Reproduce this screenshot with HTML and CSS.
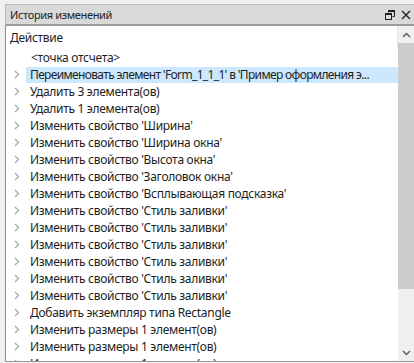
FILE: index.html
```html
<!DOCTYPE html>
<html lang="ru">
<head>
<meta charset="utf-8">
<title>История изменений</title>
<link rel="stylesheet" href="styles.css">
</head>
<body>
<div class="panel">
  <div class="titlebar">
    <span class="title">История изменений</span>
    <span class="tools">
      <svg class="ico" width="10" height="10" viewBox="0 0 10 10"><path d="M3.5 0.5h6v6h-2M3.5 0.5v2" fill="none" stroke="#1e1e1e" stroke-width="1"/><path d="M3.5 1h6" stroke="#1e1e1e" stroke-width="2"/><rect x="0.5" y="3.5" width="6" height="6" fill="none" stroke="#1e1e1e"/><path d="M0.5 4h6" stroke="#1e1e1e" stroke-width="2"/></svg>
      <svg class="ico" width="10" height="10" viewBox="0 0 10 10"><path d="M1 1L9 9M9 1L1 9" stroke="#1e1e1e" stroke-width="1.3"/></svg>
    </span>
  </div>
  <div class="content">
    <div class="list">
      <div class="header">Действие</div>
      <div class="row root"><span class="txt">&lt;точка отсчета&gt;</span></div>
      <div class="row sel"><svg class="chev" width="6" height="9" viewBox="0 0 6 9"><path d="M1 1l3.5 3.5L1 8" fill="none" stroke="#a8a8a8" stroke-width="1.3"/></svg><span class="txt">Переименовать элемент 'Form_1_1_1' в 'Пример оформления э...</span></div>
      <div class="row"><svg class="chev" width="6" height="9" viewBox="0 0 6 9"><path d="M1 1l3.5 3.5L1 8" fill="none" stroke="#a8a8a8" stroke-width="1.3"/></svg><span class="txt">Удалить 3 элемента(ов)</span></div>
      <div class="row"><svg class="chev" width="6" height="9" viewBox="0 0 6 9"><path d="M1 1l3.5 3.5L1 8" fill="none" stroke="#a8a8a8" stroke-width="1.3"/></svg><span class="txt">Удалить 1 элемента(ов)</span></div>
      <div class="row"><svg class="chev" width="6" height="9" viewBox="0 0 6 9"><path d="M1 1l3.5 3.5L1 8" fill="none" stroke="#a8a8a8" stroke-width="1.3"/></svg><span class="txt">Изменить свойство 'Ширина'</span></div>
      <div class="row"><svg class="chev" width="6" height="9" viewBox="0 0 6 9"><path d="M1 1l3.5 3.5L1 8" fill="none" stroke="#a8a8a8" stroke-width="1.3"/></svg><span class="txt">Изменить свойство 'Ширина окна'</span></div>
      <div class="row"><svg class="chev" width="6" height="9" viewBox="0 0 6 9"><path d="M1 1l3.5 3.5L1 8" fill="none" stroke="#a8a8a8" stroke-width="1.3"/></svg><span class="txt">Изменить свойство 'Высота окна'</span></div>
      <div class="row"><svg class="chev" width="6" height="9" viewBox="0 0 6 9"><path d="M1 1l3.5 3.5L1 8" fill="none" stroke="#a8a8a8" stroke-width="1.3"/></svg><span class="txt">Изменить свойство 'Заголовок окна'</span></div>
      <div class="row"><svg class="chev" width="6" height="9" viewBox="0 0 6 9"><path d="M1 1l3.5 3.5L1 8" fill="none" stroke="#a8a8a8" stroke-width="1.3"/></svg><span class="txt">Изменить свойство 'Всплывающая подсказка'</span></div>
      <div class="row"><svg class="chev" width="6" height="9" viewBox="0 0 6 9"><path d="M1 1l3.5 3.5L1 8" fill="none" stroke="#a8a8a8" stroke-width="1.3"/></svg><span class="txt">Изменить свойство 'Стиль заливки'</span></div>
      <div class="row"><svg class="chev" width="6" height="9" viewBox="0 0 6 9"><path d="M1 1l3.5 3.5L1 8" fill="none" stroke="#a8a8a8" stroke-width="1.3"/></svg><span class="txt">Изменить свойство 'Стиль заливки'</span></div>
      <div class="row"><svg class="chev" width="6" height="9" viewBox="0 0 6 9"><path d="M1 1l3.5 3.5L1 8" fill="none" stroke="#a8a8a8" stroke-width="1.3"/></svg><span class="txt">Изменить свойство 'Стиль заливки'</span></div>
      <div class="row"><svg class="chev" width="6" height="9" viewBox="0 0 6 9"><path d="M1 1l3.5 3.5L1 8" fill="none" stroke="#a8a8a8" stroke-width="1.3"/></svg><span class="txt">Изменить свойство 'Стиль заливки'</span></div>
      <div class="row"><svg class="chev" width="6" height="9" viewBox="0 0 6 9"><path d="M1 1l3.5 3.5L1 8" fill="none" stroke="#a8a8a8" stroke-width="1.3"/></svg><span class="txt">Изменить свойство 'Стиль заливки'</span></div>
      <div class="row"><svg class="chev" width="6" height="9" viewBox="0 0 6 9"><path d="M1 1l3.5 3.5L1 8" fill="none" stroke="#a8a8a8" stroke-width="1.3"/></svg><span class="txt">Изменить свойство 'Стиль заливки'</span></div>
      <div class="row"><svg class="chev" width="6" height="9" viewBox="0 0 6 9"><path d="M1 1l3.5 3.5L1 8" fill="none" stroke="#a8a8a8" stroke-width="1.3"/></svg><span class="txt">Добавить экземпляр типа Rectangle</span></div>
      <div class="row"><svg class="chev" width="6" height="9" viewBox="0 0 6 9"><path d="M1 1l3.5 3.5L1 8" fill="none" stroke="#a8a8a8" stroke-width="1.3"/></svg><span class="txt">Изменить размеры 1 элемент(ов)</span></div>
      <div class="row"><svg class="chev" width="6" height="9" viewBox="0 0 6 9"><path d="M1 1l3.5 3.5L1 8" fill="none" stroke="#a8a8a8" stroke-width="1.3"/></svg><span class="txt">Изменить размеры 1 элемент(ов)</span></div>
      <div class="row"><svg class="chev" width="6" height="9" viewBox="0 0 6 9"><path d="M1 1l3.5 3.5L1 8" fill="none" stroke="#a8a8a8" stroke-width="1.3"/></svg><span class="txt">Изменить размеры 1 элемент(ов)</span></div>
    </div>
    <div class="scrollbar">
      <div class="sbtn"><svg width="9" height="6" viewBox="0 0 9 6"><path d="M1 5l3.5-3.5L8 5" fill="none" stroke="#606060" stroke-width="1.5"/></svg></div>
      <div class="track"><div class="thumb"></div></div>
      <div class="sbtn"><svg width="9" height="6" viewBox="0 0 9 6"><path d="M1 1l3.5 3.5L8 1" fill="none" stroke="#606060" stroke-width="1.5"/></svg></div>
    </div>
  </div>
</div>
</body>
</html>
```

FILE: styles.css
```css
html, body {
  margin: 0;
  padding: 0;
  background: #f0f0f0;
}
body {
  padding: 4px 0 0 5px;
  font-family: "Noto Sans", "Open Sans", sans-serif;
  font-size: 12px;
  letter-spacing: -0.3px;
  color: #1e1e1e;
}
.panel {
  width: 409px;
  display: flex;
  flex-direction: column;
}
.titlebar {
  height: 19px;
  border-top: 1px solid #b9b9b9;
  border-left: 1px solid #b9b9b9;
  border-bottom: 2px solid #9a9a9a;
  background: #d9d9d9;
  display: flex;
  align-items: center;
  justify-content: space-between;
  padding: 0 3px 0 4px;
}
.title {
  line-height: 19px;
  font-size: 11px;
  letter-spacing: -0.35px;
}
.tools {
  display: flex;
  gap: 6px;
  align-items: center;
}
.ico { display: block; }
.content {
  height: 335px;
  display: flex;
  background: #fff;
  border-left: 1px solid #8c8c8c;
  border-bottom: 1px solid #9a9a9a;
  overflow: hidden;
}
.list {
  flex: 1;
  overflow: hidden;
  min-width: 0;
}
.header {
  height: 23px;
  line-height: 23px;
  padding-left: 4px;
  border-right: 1px solid #e5e5e5;
  box-sizing: border-box;
}
.row {
  height: 17px;
  display: flex;
  align-items: center;
  white-space: nowrap;
}
.row .chev {
  margin-left: 8px;
  margin-right: 10px;
  flex: none;
}
.row.root .txt {
  padding-left: 25px;
}
.row.sel .txt {
  background: #cce8ff;
  flex: 1;
  height: 16px;
  line-height: 16px;
  margin-left: -4px;
  padding-left: 4px;
  letter-spacing: -0.65px;
}
.txt {
  line-height: 17px;
}
.scrollbar {
  width: 16px;
  flex: none;
  background: #f0f0f0;
  display: flex;
  flex-direction: column;
}
.sbtn {
  height: 17px;
  display: flex;
  align-items: center;
  justify-content: center;
  flex: none;
}
.track {
  flex: 1;
  display: flex;
  flex-direction: column;
}
.thumb {
  height: 246px;
  background: #cdcdcd;
}
```
